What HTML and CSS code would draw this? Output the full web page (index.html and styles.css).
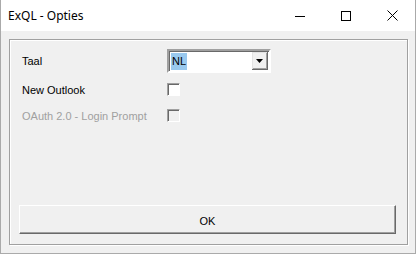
FILE: index.html
```html
<!DOCTYPE html>
<html lang="nl">

<head>
	<title>ExQL - Opties</title>
	<link rel="stylesheet" href="styles.css">
</head>

<body>
	<!-- Dialog window -->
	<div class="window">
		<!-- Title bar -->
		<div class="titlebar">
			<span class="title">ExQL - Opties</span>
			<div class="caption-buttons">
				<span class="caption-btn">
					<svg width="10" height="10" viewBox="0 0 10 10"><path d="M0 5.5h10" stroke="#000" stroke-width="1"/></svg>
				</span>
				<span class="caption-btn">
					<svg width="10" height="10" viewBox="0 0 10 10"><rect x="0.5" y="0.5" width="9" height="9" fill="none" stroke="#000" stroke-width="1"/></svg>
				</span>
				<span class="caption-btn">
					<svg width="11" height="11" viewBox="0 0 11 11"><path d="M0.5 0.5L10.5 10.5M10.5 0.5L0.5 10.5" stroke="#000" stroke-width="1"/></svg>
				</span>
			</div>
		</div>

		<!-- Client area -->
		<div class="client">
			<div class="frame">
				<!-- Taal -->
				<div class="form-row row-taal">
					<span class="label">Taal</span>
					<div class="combo">
						<span class="combo-text"><span class="selected">NL</span></span>
						<span class="combo-btn">
							<svg width="7" height="4" viewBox="0 0 7 4"><path d="M0 0h7L3.5 4z" fill="#000"/></svg>
						</span>
					</div>
				</div>
				<!-- New Outlook -->
				<div class="form-row row-outlook">
					<span class="label">New Outlook</span>
					<span class="checkbox"></span>
				</div>
				<!-- OAuth -->
				<div class="form-row row-oauth">
					<span class="label disabled">OAuth 2.0 - Login Prompt</span>
					<span class="checkbox checkbox-disabled"></span>
				</div>

				<!-- OK button -->
				<div class="btn">OK</div>
			</div>
		</div>
	</div>
</body>

</html>
```

FILE: styles.css
```css
/* Reset page */
body {
	margin: 0;
	font-family: "Liberation Sans", Arial, sans-serif;
	font-size: 11px;
	color: #000;
}

/* Window with thin border */
.window {
	width: 416px;
	height: 254px;
	box-sizing: border-box;
	border: 1px solid #aaaaaa;
	border-top: none;
	background-color: #f0f0f0;
	display: flex;
	flex-direction: column;
}

/* Title bar */
.titlebar {
	height: 31px;
	background-color: #fff;
	display: flex;
	align-items: center;
	justify-content: space-between;
}

.title {
	font-family: "Noto Sans", sans-serif;
	font-size: 12px;
	padding-left: 7px;
	padding-bottom: 1px;
}

.caption-buttons {
	display: flex;
	height: 100%;
}

.caption-btn {
	width: 46px;
	display: flex;
	align-items: center;
	justify-content: center;
}

/* Client area */
.client {
	flex: 1;
	padding: 8px 7px 8px 8px;
	display: flex;
}

/* Etched frame */
.frame {
	flex: 1;
	border: 1px solid #a0a0a0;
	box-shadow: inset 1px 1px 0 #fff, 1px 1px 0 #fff;
	display: flex;
	flex-direction: column;
	padding: 0 11px 10px 12px;
}

/* Form rows */
.form-row {
	display: flex;
	align-items: center;
}

.label {
	width: 145px;
}

.label.disabled {
	color: #a0a0a0;
}

.row-taal {
	margin-top: 9px;
	height: 24px;
}

.row-outlook {
	margin-top: 10px;
	height: 13px;
}

.row-oauth {
	margin-top: 13px;
	height: 13px;
}

/* Combo box */
.combo {
	width: 100px;
	height: 20px;
	border: 2px solid;
	border-color: #a0a0a0 #fff #fff #a0a0a0;
	box-shadow: inset 1px 1px 0 #696969;
	background-color: #fff;
	display: flex;
	align-items: center;
	justify-content: space-between;
}

.combo-text {
	padding-left: 2px;
	font-size: 11px;
}

.selected {
	background-color: #99c9ef;
	padding: 2px 1px 3px 1px;
}

.combo-btn {
	width: 16px;
	height: 18px;
	margin-right: 1px;
	box-sizing: border-box;
	background-color: #f0f0f0;
	border-right: 1px solid #696969;
	border-bottom: 1px solid #696969;
	box-shadow: inset 1px 1px 0 #e3e3e3, inset -1px -1px 0 #a0a0a0;
	display: flex;
	align-items: center;
	justify-content: center;
}

/* Checkboxes */
.checkbox {
	width: 13px;
	height: 13px;
	box-sizing: border-box;
	border: 1px solid;
	border-color: #a0a0a0 #fff #fff #a0a0a0;
	box-shadow: inset 1px 1px 0 #696969;
	background-color: #fff;
}

.checkbox-disabled {
	background-color: #f0f0f0;
}

/* OK button */
.btn {
	margin-top: auto;
	margin-left: -3px;
	height: 29px;
	box-sizing: border-box;
	border: 1px solid;
	border-color: #fff #696969 #696969 #fff;
	box-shadow: inset -1px -1px 0 #a0a0a0;
	display: flex;
	align-items: center;
	justify-content: center;
	padding-top: 2px;
}
```
